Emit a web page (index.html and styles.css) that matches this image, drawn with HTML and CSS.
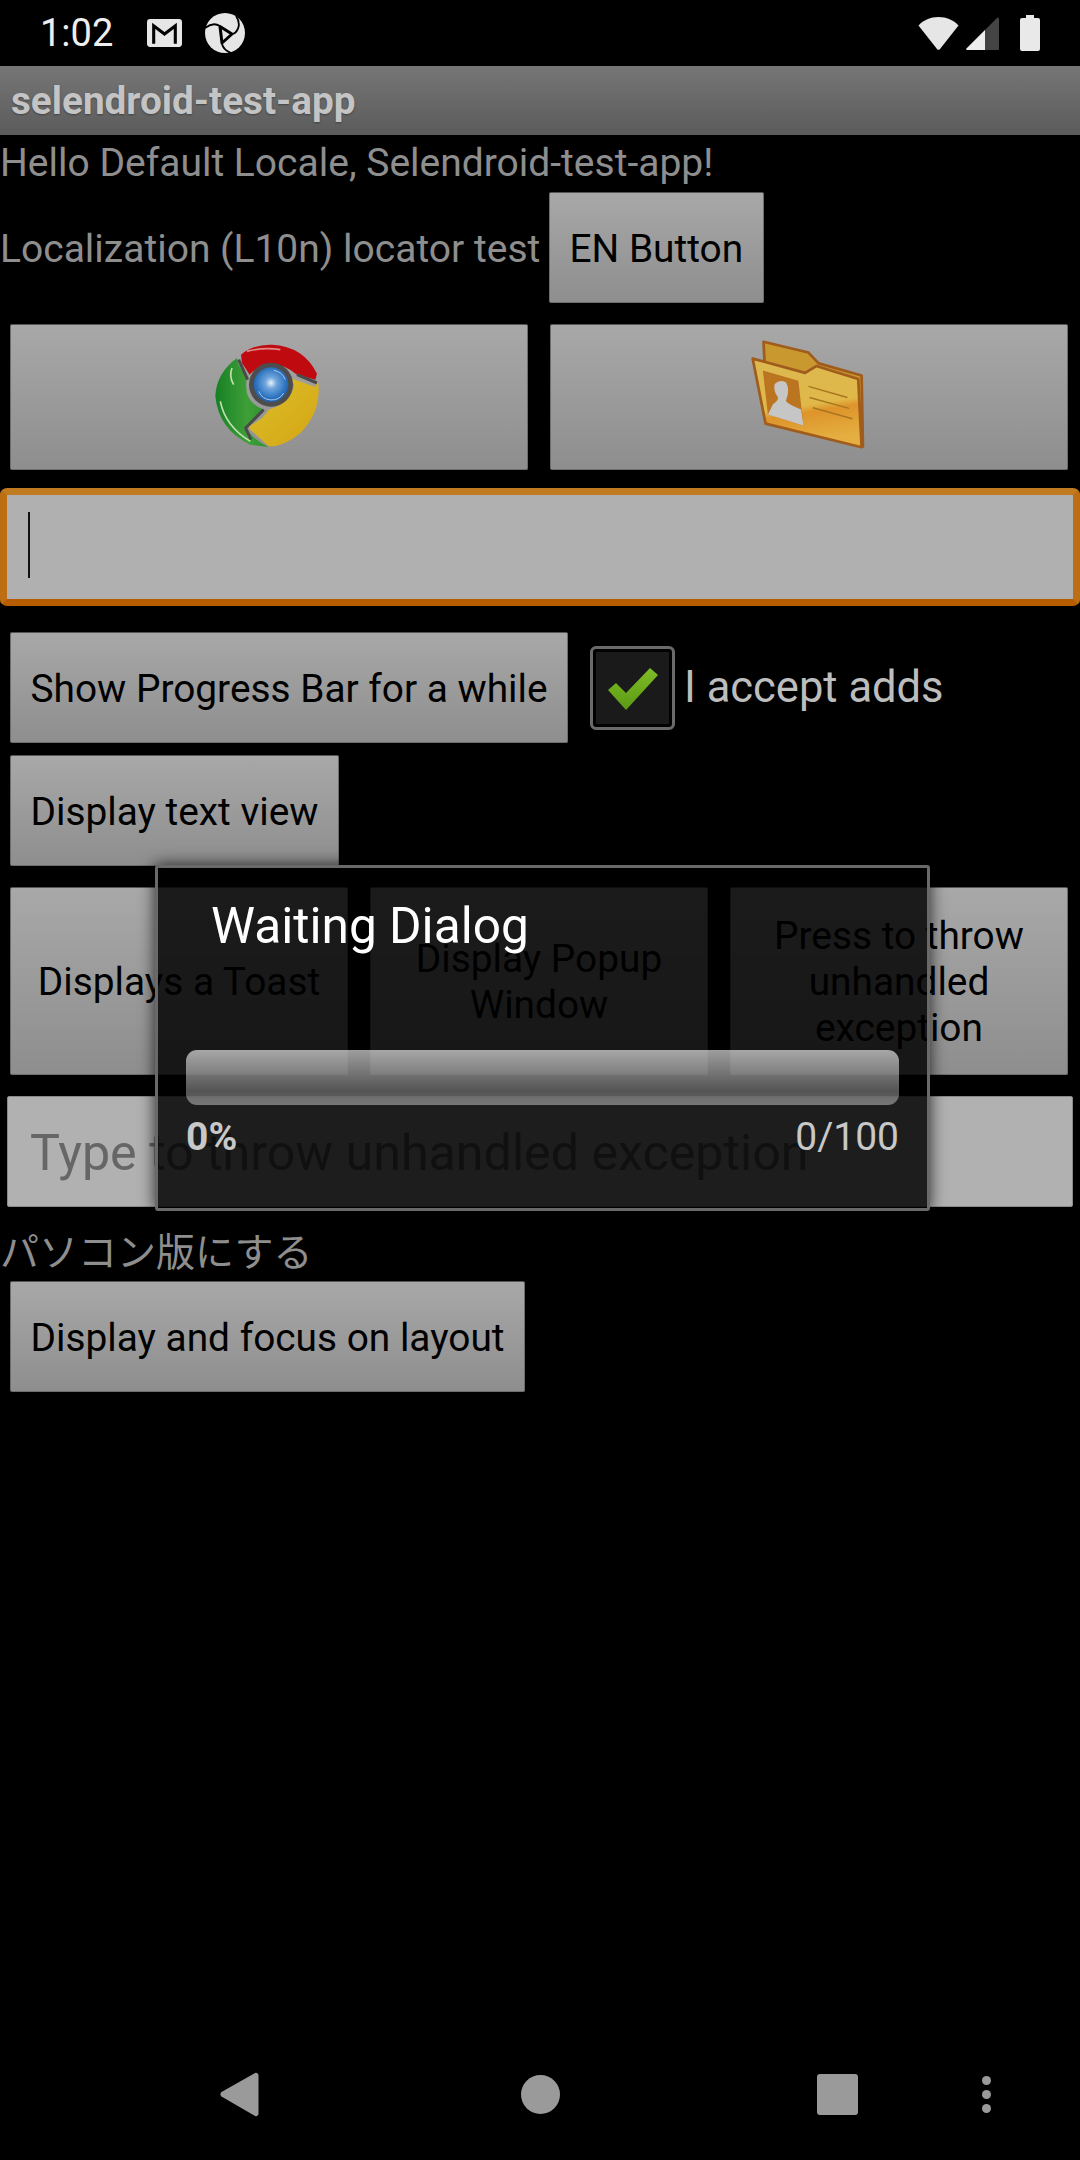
FILE: index.html
```html
<!DOCTYPE html>
<html lang="en">
<head>
<meta charset="utf-8">
<title>selendroid-test-app</title>
<link rel="stylesheet" href="styles.css">
</head>
<body>
<div class="screen">
  <header class="statusbar">
    <span class="clock">1:02</span>
    <svg class="ic-gmail" viewBox="0 0 34 27"><rect width="34" height="27" rx="3" fill="#e6e6e6"/><path d="M6.500 24V6.500L17 14.500 27.500 6.500V24" fill="none" stroke="#000" stroke-width="3"/></svg>
    <svg class="ic-swirl" viewBox="0 0 40 40"><circle cx="20" cy="20" r="20" fill="#e6e6e6"/><path d="M0 15C5 11 10 10 15 13M31 3C36 10 34 18 28 21M17 31C18 35 21 38 26 40" fill="none" stroke="#000" stroke-width="1.800"/><path d="M15 13.500 27 21 17 30z" fill="#e6e6e6" stroke="#000" stroke-width="3" stroke-linejoin="round"/></svg>
    <span class="status-right">
      <svg class="ic-wifi" viewBox="0 0 40 33"><path d="M0 8.500C5 3 12 0 20 0s15 3 20 8.500L21.500 32a2 2 0 0 1-3 0z" fill="#e6e6e6"/></svg>
      <svg class="ic-signal" viewBox="0 0 33 33"><path d="M0 32 31 1a1.200 1.200 0 0 1 2 1v30a1 1 0 0 1-1 1H1z" fill="#444"/><path d="M0 32 19 13v20H1z" fill="#eee"/></svg>
      <svg class="ic-battery" viewBox="0 0 20 36"><path d="M6 0h8v3h4a2 2 0 0 1 2 2v29a2 2 0 0 1-2 2H2a2 2 0 0 1-2-2V5a2 2 0 0 1 2-2h4z" fill="#e9e9e9"/></svg>
    </span>
  </header>

  <div class="titlebar">selendroid-test-app</div>

  <main class="content">
    <div class="hello text">Hello Default Locale, Selendroid-test-app!</div>

    <div class="l10n-row">
      <span class="text l10n-label">Localization (L10n) locator test</span>
      <div class="btn">EN Button</div>
    </div>

    <div class="icon-row">
      <div class="btn icon-btn">
        <svg class="ic-chrome" viewBox="40 40 320 315">
          <defs>
            <radialGradient id="blue" cx=".5" cy=".45" r=".55"><stop offset="0" stop-color="#e8f2fa"/><stop offset=".3" stop-color="#6fa5dc"/><stop offset=".8" stop-color="#2a70bd"/><stop offset="1" stop-color="#2060a8"/></radialGradient>
            <linearGradient id="yellow" x1="0" y1="0" x2="1" y2="1"><stop offset="0" stop-color="#dcc02c"/><stop offset="1" stop-color="#d4a412"/></linearGradient>
            <linearGradient id="green" x1="0" y1="0" x2="1" y2="0"><stop offset="0" stop-color="#168024"/><stop offset=".6" stop-color="#3f9f38"/><stop offset="1" stop-color="#2a932e"/></linearGradient>
          </defs>
          <path d="M122 75Q160 43 215 45 310 50 350 132L345 150 290 135Q250 100 200 105 165 115 148 135L125 100Z" fill="#bf0a10"/>
          <path d="M140 65Q190 52 240 60" fill="none" stroke="#e08a8a" stroke-width="5"/>
          <path d="M352 148Q368 240 300 310 250 352 205 350L150 300 145 290Q190 268 205 240 270 220 282 165L270 145 345 172Z" fill="url(#yellow)"/>
          <path d="M110 85Q48 130 45 200 55 300 150 345L205 352Q165 335 135 295L190 240Q150 225 140 190 135 165 140 145L115 105Z" fill="url(#green)"/>
          <path d="M60 215Q75 290 150 335M95 115Q85 140 100 165" fill="none" stroke="#bfe0b0" stroke-width="5"/>
          <path d="M115 90 142 150M290 135 350 160M190 240 136 295 152 330" fill="none" stroke="#4a4a4a" stroke-width="9"/>
          <circle cx="212" cy="165" r="66" fill="#4d4d4d"/>
          <circle cx="212" cy="165" r="52" fill="url(#blue)"/>
          <path d="M175 185A42 42 0 0 0 250 190M255 150A45 45 0 0 0 220 122" fill="none" stroke="#a8c8e8" stroke-width="3"/>
        </svg>
      </div>
      <div class="btn icon-btn">
        <svg class="ic-folder" viewBox="35 30 340 335">
          <defs>
            <linearGradient id="front" x1="0" y1="0" x2=".2" y2="1"><stop offset="0" stop-color="#dcb850"/><stop offset=".6" stop-color="#e0b84a"/><stop offset=".68" stop-color="#de942a"/><stop offset="1" stop-color="#e4ae40"/></linearGradient>
          </defs>
          <path d="M72 40 205 72 235 104 362 140 366 350 80 200Z" fill="#c9982e" stroke="#a05c1c" stroke-width="8" stroke-linejoin="round"/>
          <path d="M40 90 195 132 228 112 352 150 362 352 78 282Z" fill="url(#front)" stroke="#a05c1c" stroke-width="8" stroke-linejoin="round"/>
          <path d="M70 125 175 155 190 288 85 255Z" fill="#bb7420"/>
          <path d="M85 255 100 225Q115 215 115 205 100 185 105 165 120 150 138 160 152 180 138 215 145 225 183 240L190 288Z" fill="#c6c6c6"/>
          <path d="M205 172 320 205M208 205 325 237M218 235 335 268" fill="none" stroke="#a8761f" stroke-width="4.500"/>
        </svg>
      </div>
    </div>

    <div class="edit"><span class="caret"></span></div>

    <div class="progress-row">
      <div class="btn">Show Progress Bar for a while</div>
      <div class="checkbox">
        <svg class="ic-check" viewBox="0 0 50 42"><defs><linearGradient id="chk" x1="0" y1="0" x2="0" y2="1"><stop offset="0" stop-color="#80bc26"/><stop offset="1" stop-color="#5a9a14"/></linearGradient></defs><path d="M0 22 8 15 18 25 42 0 50 7 18 42z" fill="url(#chk)"/></svg>
      </div>
      <span class="check-label">I accept adds</span>
    </div>

    <div class="text-view-row"><div class="btn">Display text view</div></div>

    <div class="triple-row">
      <div class="btn multi">Displays a Toast</div>
      <div class="btn multi">Display Popup Window</div>
      <div class="btn multi">Press to throw unhandled exception</div>
    </div>

    <div class="hint-input">Type to throw unhandled exception</div>

    <div class="jp text">パソコン版にする</div>

    <div class="focus-row"><div class="btn">Display and focus on layout</div></div>
  </main>

  <nav class="navbar">
    <svg class="nav-back" viewBox="0 0 40 46"><path d="M1.500 20.500 36 1a2.500 2.500 0 0 1 3.500 2v40a2.500 2.500 0 0 1-3.500 2L1.500 25a3 3 0 0 1 0-4.500z" fill="#9a9a9a"/></svg>
    <span class="nav-home"></span>
    <span class="nav-recent"></span>
    <span class="nav-more"><i></i><i></i><i></i></span>
  </nav>

  <section class="dialog">
    <h1 class="dialog-title">Waiting Dialog</h1>
    <div class="bar"></div>
    <div class="bar-labels"><b>0%</b><span>0/100</span></div>
  </section>
</div>
</body>
</html>
```

FILE: styles.css
```css
* { box-sizing: border-box; }
html, body { margin: 0; padding: 0; background: #000; }
body { font-family: Roboto, "Noto Sans CJK JP", sans-serif; font-size: 39px; }

.screen { position: relative; width: 1080px; height: 2160px; display: flex; flex-direction: column; background: #000; overflow: hidden; }

.statusbar { height: 66px; flex: none; display: flex; align-items: center; padding: 0 40px; color: #eee; }
.clock { font-size: 38px; font-weight: 400; width: 107px; }
.ic-gmail { width: 35px; height: 28px; margin-right: 23px; }
.ic-swirl { width: 40px; height: 40px; }
.status-right { margin-left: auto; display: flex; align-items: center; }
.ic-wifi { width: 43px; height: 33px; margin-right: 6px; }
.ic-signal { width: 33px; height: 33px; margin-right: 21px; }
.ic-battery { width: 20px; height: 36px; }

.titlebar { height: 69px; flex: none; display: flex; align-items: center; padding-left: 11px; background: linear-gradient(#767676, #5b5b5b); color: #c4c4c4; font-weight: 700; font-size: 38.700px; text-shadow: 0 1px 2px rgba(0,0,0,.35); }

.content { flex: 1; display: flex; flex-direction: column; }
.text { color: #8e8e8e; }
.hello { height: 50px; display: flex; align-items: center; padding-top: 6px; }

.btn { display: flex; align-items: center; justify-content: center; height: 111px; padding: 2px 19.500px 0; background: linear-gradient(#a8a8a8, #8e8e8e); border: 1px solid #6d6d6d; border-top-color: #555; border-radius: 2px; color: #000; font-size: 38.850px; text-align: center; line-height: 46px; }

.l10n-row { display: flex; align-items: center; margin-top: 7px; }
.l10n-label { width: 549px; padding-top: 2px; }
.icon-row { display: grid; grid-template-columns: 518px 518px; gap: 22px; padding-left: 10px; margin-top: 21px; }
.icon-btn { height: 146px; padding: 0; }
.ic-chrome { width: 108px; height: 105px; flex: none; margin-top: -3px; margin-left: -4px; }
.ic-folder { width: 115px; height: 114px; flex: none; margin-top: -4px; margin-left: -2px; }

.edit { height: 118px; margin-top: 18px; border: 7px solid; border-color: #c07a20 #bd6e12 #b85c00; border-radius: 7px; background: #b0b0b0; padding: 17px 0 0 21px; }
.caret { display: block; width: 2px; height: 66px; background: #111; }

.progress-row { display: flex; align-items: center; margin-top: 26px; padding-left: 10px; }
.checkbox { width: 85px; height: 84px; margin-left: 22px; border: 3px solid #6a6a6a; border-radius: 6px; background: #1a1a1a; box-shadow: inset 0 0 0 3px #000; display: flex; align-items: center; justify-content: center; }
.ic-check { width: 50px; height: 42px; margin-top: 2px; }
.check-label { color: #bdbdbd; margin-left: 9px; font-size: 43.500px; }

.text-view-row, .focus-row { display: flex; padding-left: 10px; margin-top: 12px; }
.focus-row { margin-top: 0; }

.triple-row { display: grid; grid-template-columns: repeat(3, 338px); gap: 22px; padding-left: 10px; margin-top: 21px; }
.multi { height: 188px; }

.hint-input { height: 111px; margin: 21px 7px 0; padding: 2px 0 0 22px; display: flex; align-items: center; background: #b1b1b1; border: 1px solid #8a8a8a; border-radius: 2px; color: #666; font-size: 50.200px; }

.jp { height: 74px; display: flex; align-items: center; padding-top: 9px; }

.navbar { position: relative; height: 126px; flex: none; display: flex; align-items: center; padding-bottom: 6px; }
.nav-back { width: 39px; height: 45px; margin-left: 220px; }
.nav-home { width: 39px; height: 39px; margin-left: 262px; border-radius: 50%; background: #9a9a9a; }
.nav-recent { width: 41px; height: 41px; margin-left: 257px; border-radius: 3px; background: #9a9a9a; }
.nav-more { display: flex; flex-direction: column; gap: 5px; margin-left: 124px; }
.nav-more i { display: block; width: 9px; height: 9px; border-radius: 50%; background: #9a9a9a; }

.dialog { position: absolute; left: 155px; top: 865px; width: 775px; height: 346px; border: 3px solid #696969; border-radius: 3px; background: rgba(0,0,0,.84); box-shadow: 0 0 16px rgba(0,0,0,.75); padding: 0 28px; display: flex; flex-direction: column; }
.dialog-title { margin: 0; padding: 30px 0 0 25px; height: 182px; font-size: 49.600px; font-weight: 400; line-height: 56px; color: #fff; }
.bar { height: 55px; flex: none; border-radius: 11px; background: linear-gradient(rgba(255,255,255,.62), rgba(255,255,255,.5) 30%, rgba(255,255,255,.33) 75%, rgba(255,255,255,.4)); }
.bar-labels { display: flex; justify-content: space-between; margin-top: 7px; color: #c8c8c8; line-height: 50px; }
```
